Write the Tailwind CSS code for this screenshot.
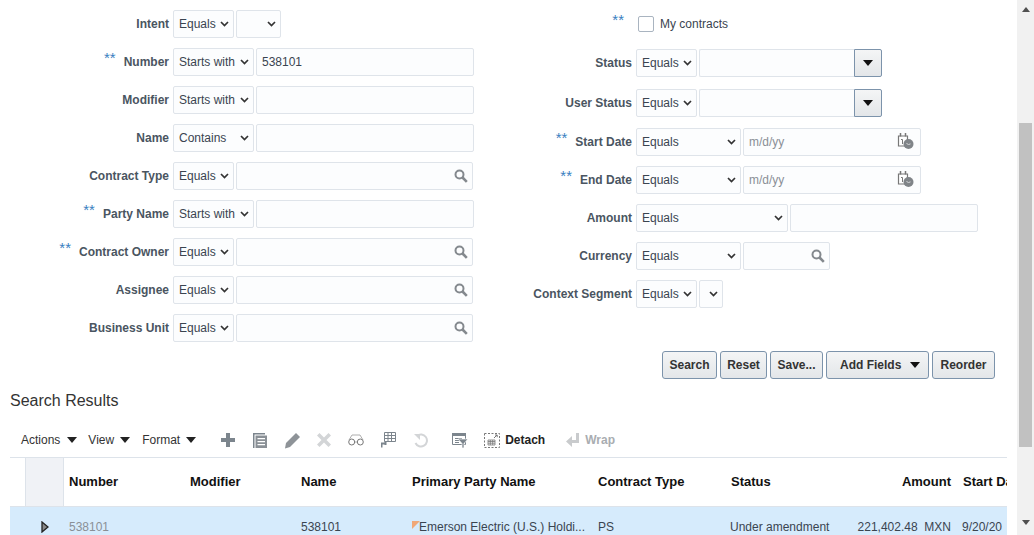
<!DOCTYPE html>
<html lang="en">

<head>
    <meta charset="UTF-8">
    <script src="https://cdn.jsdelivr.net/npm/@tailwindcss/browser@4"></script>
    <title>Contracts Search</title>
</head>

<body class="bg-white h-[535px] overflow-hidden flex font-['Liberation_Sans',Arial,sans-serif] text-xs text-[#3a4450]">
    <div class="w-[1017px] shrink-0 overflow-hidden">
        <!-- Search form -->
        <div class="flex h-[351px]">
            <!-- Left column -->
            <div class="w-[480px] shrink-0 pt-[10px] flex flex-col gap-[10px]">
                <div class="flex items-center h-[28px]">
                    <label class="w-[169px] text-right font-bold text-[#4a5561] mr-[4px]">Intent</label>
                    <div class="w-[61px] h-[28px] border border-[#dfe4ea] rounded-[2px] bg-[#fcfdfe] flex items-center justify-between pl-[5px] pr-[4px]"><span>Equals</span><svg class="w-[9px] h-[6px]" viewBox="0 0 9 6"><path d="M1 1l3.5 3.5L8 1" fill="none" stroke="#333" stroke-width="1.7"/></svg></div>
                    <div class="w-[45px] h-[28px] ml-[2px] border border-[#dfe4ea] rounded-[2px] bg-[#fcfdfe] flex items-center justify-end pr-[4px]"><svg class="w-[9px] h-[6px]" viewBox="0 0 9 6"><path d="M1 1l3.5 3.5L8 1" fill="none" stroke="#333" stroke-width="1.7"/></svg></div>
                </div>
                <div class="flex items-center h-[28px]">
                    <label class="w-[169px] text-right font-bold text-[#4a5561] mr-[4px]"><span class="relative -top-[3px] mr-[8px] font-normal leading-[0px] text-[15px] text-[#3a7fc1]">**</span>Number</label>
                    <div class="w-[81px] h-[28px] border border-[#dfe4ea] rounded-[2px] bg-[#fcfdfe] flex items-center justify-between pl-[5px] pr-[4px]"><span>Starts with</span><svg class="w-[9px] h-[6px]" viewBox="0 0 9 6"><path d="M1 1l3.5 3.5L8 1" fill="none" stroke="#333" stroke-width="1.7"/></svg></div>
                    <div class="w-[218px] h-[28px] ml-[2px] border border-[#dfe4ea] rounded-[2px] bg-[#fcfdfe] flex items-center pl-[5px]">538101</div>
                </div>
                <div class="flex items-center h-[28px]">
                    <label class="w-[169px] text-right font-bold text-[#4a5561] mr-[4px]">Modifier</label>
                    <div class="w-[81px] h-[28px] border border-[#dfe4ea] rounded-[2px] bg-[#fcfdfe] flex items-center justify-between pl-[5px] pr-[4px]"><span>Starts with</span><svg class="w-[9px] h-[6px]" viewBox="0 0 9 6"><path d="M1 1l3.5 3.5L8 1" fill="none" stroke="#333" stroke-width="1.7"/></svg></div>
                    <div class="w-[218px] h-[28px] ml-[2px] border border-[#dfe4ea] rounded-[2px] bg-[#fcfdfe]"></div>
                </div>
                <div class="flex items-center h-[28px]">
                    <label class="w-[169px] text-right font-bold text-[#4a5561] mr-[4px]">Name</label>
                    <div class="w-[81px] h-[28px] border border-[#dfe4ea] rounded-[2px] bg-[#fcfdfe] flex items-center justify-between pl-[5px] pr-[4px]"><span>Contains</span><svg class="w-[9px] h-[6px]" viewBox="0 0 9 6"><path d="M1 1l3.5 3.5L8 1" fill="none" stroke="#333" stroke-width="1.7"/></svg></div>
                    <div class="w-[218px] h-[28px] ml-[2px] border border-[#dfe4ea] rounded-[2px] bg-[#fcfdfe]"></div>
                </div>
                <div class="flex items-center h-[28px]">
                    <label class="w-[169px] text-right font-bold text-[#4a5561] mr-[4px]">Contract Type</label>
                    <div class="w-[61px] h-[28px] border border-[#dfe4ea] rounded-[2px] bg-[#fcfdfe] flex items-center justify-between pl-[5px] pr-[4px]"><span>Equals</span><svg class="w-[9px] h-[6px]" viewBox="0 0 9 6"><path d="M1 1l3.5 3.5L8 1" fill="none" stroke="#333" stroke-width="1.7"/></svg></div>
                    <div class="w-[237px] h-[28px] ml-[2px] border border-[#dfe4ea] rounded-[2px] bg-[#fcfdfe] flex items-center justify-end pr-[4px]"><svg class="w-[14px] h-[14px]" viewBox="0 0 14 14"><circle cx="5.5" cy="5.5" r="4" fill="none" stroke="#84898e" stroke-width="2"/><path d="M8.5 8.5l4.3 4.3" stroke="#84898e" stroke-width="2.6"/></svg></div>
                </div>
                <div class="flex items-center h-[28px]">
                    <label class="w-[169px] text-right font-bold text-[#4a5561] mr-[4px]"><span class="relative -top-[3px] mr-[8px] font-normal leading-[0px] text-[15px] text-[#3a7fc1]">**</span>Party Name</label>
                    <div class="w-[81px] h-[28px] border border-[#dfe4ea] rounded-[2px] bg-[#fcfdfe] flex items-center justify-between pl-[5px] pr-[4px]"><span>Starts with</span><svg class="w-[9px] h-[6px]" viewBox="0 0 9 6"><path d="M1 1l3.5 3.5L8 1" fill="none" stroke="#333" stroke-width="1.7"/></svg></div>
                    <div class="w-[218px] h-[28px] ml-[2px] border border-[#dfe4ea] rounded-[2px] bg-[#fcfdfe]"></div>
                </div>
                <div class="flex items-center h-[28px]">
                    <label class="w-[169px] text-right font-bold text-[#4a5561] mr-[4px]"><span class="relative -top-[3px] mr-[8px] font-normal leading-[0px] text-[15px] text-[#3a7fc1]">**</span>Contract Owner</label>
                    <div class="w-[61px] h-[28px] border border-[#dfe4ea] rounded-[2px] bg-[#fcfdfe] flex items-center justify-between pl-[5px] pr-[4px]"><span>Equals</span><svg class="w-[9px] h-[6px]" viewBox="0 0 9 6"><path d="M1 1l3.5 3.5L8 1" fill="none" stroke="#333" stroke-width="1.7"/></svg></div>
                    <div class="w-[237px] h-[28px] ml-[2px] border border-[#dfe4ea] rounded-[2px] bg-[#fcfdfe] flex items-center justify-end pr-[4px]"><svg class="w-[14px] h-[14px]" viewBox="0 0 14 14"><circle cx="5.5" cy="5.5" r="4" fill="none" stroke="#84898e" stroke-width="2"/><path d="M8.5 8.5l4.3 4.3" stroke="#84898e" stroke-width="2.6"/></svg></div>
                </div>
                <div class="flex items-center h-[28px]">
                    <label class="w-[169px] text-right font-bold text-[#4a5561] mr-[4px]">Assignee</label>
                    <div class="w-[61px] h-[28px] border border-[#dfe4ea] rounded-[2px] bg-[#fcfdfe] flex items-center justify-between pl-[5px] pr-[4px]"><span>Equals</span><svg class="w-[9px] h-[6px]" viewBox="0 0 9 6"><path d="M1 1l3.5 3.5L8 1" fill="none" stroke="#333" stroke-width="1.7"/></svg></div>
                    <div class="w-[237px] h-[28px] ml-[2px] border border-[#dfe4ea] rounded-[2px] bg-[#fcfdfe] flex items-center justify-end pr-[4px]"><svg class="w-[14px] h-[14px]" viewBox="0 0 14 14"><circle cx="5.5" cy="5.5" r="4" fill="none" stroke="#84898e" stroke-width="2"/><path d="M8.5 8.5l4.3 4.3" stroke="#84898e" stroke-width="2.6"/></svg></div>
                </div>
                <div class="flex items-center h-[28px]">
                    <label class="w-[169px] text-right font-bold text-[#4a5561] mr-[4px]">Business Unit</label>
                    <div class="w-[61px] h-[28px] border border-[#dfe4ea] rounded-[2px] bg-[#fcfdfe] flex items-center justify-between pl-[5px] pr-[4px]"><span>Equals</span><svg class="w-[9px] h-[6px]" viewBox="0 0 9 6"><path d="M1 1l3.5 3.5L8 1" fill="none" stroke="#333" stroke-width="1.7"/></svg></div>
                    <div class="w-[237px] h-[28px] ml-[2px] border border-[#dfe4ea] rounded-[2px] bg-[#fcfdfe] flex items-center justify-end pr-[4px]"><svg class="w-[14px] h-[14px]" viewBox="0 0 14 14"><circle cx="5.5" cy="5.5" r="4" fill="none" stroke="#84898e" stroke-width="2"/><path d="M8.5 8.5l4.3 4.3" stroke="#84898e" stroke-width="2.6"/></svg></div>
                </div>
            </div>

            <!-- Right column -->
            <div class="flex-1 pt-[10px] flex flex-col">
                <div class="flex items-center h-[28px]">
                    <label class="w-[152px] text-right mr-[4px] pr-[8px]"><span class="relative -top-[3px] leading-[0px] text-[15px] text-[#3a7fc1]">**</span></label>
                    <div class="w-[16px] h-[16px] ml-[2px] border border-[#a9b4c0] rounded-[2px] bg-white"></div>
                    <span class="ml-[6px]">My contracts</span>
                </div>
                <div class="flex items-center h-[28px] mt-[11px]">
                    <label class="w-[152px] text-right font-bold text-[#4a5561] mr-[4px]">Status</label>
                    <div class="w-[61px] h-[28px] border border-[#dfe4ea] rounded-[2px] bg-[#fcfdfe] flex items-center justify-between pl-[5px] pr-[4px]"><span>Equals</span><svg class="w-[9px] h-[6px]" viewBox="0 0 9 6"><path d="M1 1l3.5 3.5L8 1" fill="none" stroke="#333" stroke-width="1.7"/></svg></div>
                    <div class="w-[155px] h-[28px] ml-[2px] border border-r-0 border-[#dfe4ea] rounded-l-[2px] bg-[#fcfdfe]"></div>
                    <div class="w-[28px] h-[28px] border border-[#7c93ab] rounded-r-[2px] bg-gradient-to-b from-[#f4f5f6] to-[#e3e6e9] flex items-center justify-center"><svg class="w-[10px] h-[6px]" viewBox="0 0 10 6"><path d="M0 0h10L5 6z" fill="#111"/></svg></div>
                </div>
                <div class="flex items-center h-[28px] mt-[12px]">
                    <label class="w-[152px] text-right font-bold text-[#4a5561] mr-[4px]">User Status</label>
                    <div class="w-[61px] h-[28px] border border-[#dfe4ea] rounded-[2px] bg-[#fcfdfe] flex items-center justify-between pl-[5px] pr-[4px]"><span>Equals</span><svg class="w-[9px] h-[6px]" viewBox="0 0 9 6"><path d="M1 1l3.5 3.5L8 1" fill="none" stroke="#333" stroke-width="1.7"/></svg></div>
                    <div class="w-[155px] h-[28px] ml-[2px] border border-r-0 border-[#dfe4ea] rounded-l-[2px] bg-[#fcfdfe]"></div>
                    <div class="w-[28px] h-[28px] border border-[#7c93ab] rounded-r-[2px] bg-gradient-to-b from-[#f4f5f6] to-[#e3e6e9] flex items-center justify-center"><svg class="w-[10px] h-[6px]" viewBox="0 0 10 6"><path d="M0 0h10L5 6z" fill="#111"/></svg></div>
                </div>
                <div class="flex items-center h-[28px] mt-[11px]">
                    <label class="w-[152px] text-right font-bold text-[#4a5561] mr-[4px]"><span class="relative -top-[3px] mr-[8px] font-normal leading-[0px] text-[15px] text-[#3a7fc1]">**</span>Start Date</label>
                    <div class="w-[105px] h-[28px] border border-[#dfe4ea] rounded-[2px] bg-[#fcfdfe] flex items-center justify-between pl-[5px] pr-[4px]"><span>Equals</span><svg class="w-[9px] h-[6px]" viewBox="0 0 9 6"><path d="M1 1l3.5 3.5L8 1" fill="none" stroke="#333" stroke-width="1.7"/></svg></div>
                    <div class="w-[178px] h-[28px] ml-[2px] border border-[#dfe4ea] rounded-[2px] bg-[#fcfdfe] flex items-center justify-between pl-[5px] pr-[6px] text-[#8a8f96]"><span>m/d/yy</span><svg class="w-[17px] h-[16px] -mt-[2px]" viewBox="0 0 17 16"><path d="M1.500 3h9v10h-9z" fill="#fff" stroke="#777" stroke-width="1.2"/><path d="M3.500 0v3.500M8.500 0v3.500" stroke="#777" stroke-width="1.500"/><path d="M4 6.500h1.500v4.500" fill="none" stroke="#777"/><circle cx="11.500" cy="11" r="5" fill="#808488"/><path d="M9.500 10.500l2 1 2-.6" fill="none" stroke="#d5d7d9"/></svg></div>
                </div>
                <div class="flex items-center h-[28px] mt-[10px]">
                    <label class="w-[152px] text-right font-bold text-[#4a5561] mr-[4px]"><span class="relative -top-[3px] mr-[8px] font-normal leading-[0px] text-[15px] text-[#3a7fc1]">**</span>End Date</label>
                    <div class="w-[105px] h-[28px] border border-[#dfe4ea] rounded-[2px] bg-[#fcfdfe] flex items-center justify-between pl-[5px] pr-[4px]"><span>Equals</span><svg class="w-[9px] h-[6px]" viewBox="0 0 9 6"><path d="M1 1l3.5 3.5L8 1" fill="none" stroke="#333" stroke-width="1.7"/></svg></div>
                    <div class="w-[178px] h-[28px] ml-[2px] border border-[#dfe4ea] rounded-[2px] bg-[#fcfdfe] flex items-center justify-between pl-[5px] pr-[6px] text-[#8a8f96]"><span>m/d/yy</span><svg class="w-[17px] h-[16px] -mt-[2px]" viewBox="0 0 17 16"><path d="M1.500 3h9v10h-9z" fill="#fff" stroke="#777" stroke-width="1.2"/><path d="M3.500 0v3.500M8.500 0v3.500" stroke="#777" stroke-width="1.500"/><path d="M4 6.500h1.500v4.500" fill="none" stroke="#777"/><circle cx="11.500" cy="11" r="5" fill="#808488"/><path d="M9.500 10.500l2 1 2-.6" fill="none" stroke="#d5d7d9"/></svg></div>
                </div>
                <div class="flex items-center h-[28px] mt-[10px]">
                    <label class="w-[152px] text-right font-bold text-[#4a5561] mr-[4px]">Amount</label>
                    <div class="w-[152px] h-[28px] border border-[#dfe4ea] rounded-[2px] bg-[#fcfdfe] flex items-center justify-between pl-[5px] pr-[4px]"><span>Equals</span><svg class="w-[9px] h-[6px]" viewBox="0 0 9 6"><path d="M1 1l3.5 3.5L8 1" fill="none" stroke="#333" stroke-width="1.7"/></svg></div>
                    <div class="w-[188px] h-[28px] ml-[2px] border border-[#dfe4ea] rounded-[2px] bg-[#fcfdfe]"></div>
                </div>
                <div class="flex items-center h-[28px] mt-[10px]">
                    <label class="w-[152px] text-right font-bold text-[#4a5561] mr-[4px]">Currency</label>
                    <div class="w-[105px] h-[28px] border border-[#dfe4ea] rounded-[2px] bg-[#fcfdfe] flex items-center justify-between pl-[5px] pr-[4px]"><span>Equals</span><svg class="w-[9px] h-[6px]" viewBox="0 0 9 6"><path d="M1 1l3.5 3.5L8 1" fill="none" stroke="#333" stroke-width="1.7"/></svg></div>
                    <div class="w-[87px] h-[28px] ml-[2px] border border-[#dfe4ea] rounded-[2px] bg-[#fcfdfe] flex items-center justify-end pr-[4px]"><svg class="w-[14px] h-[14px]" viewBox="0 0 14 14"><circle cx="5.5" cy="5.5" r="4" fill="none" stroke="#84898e" stroke-width="2"/><path d="M8.5 8.5l4.3 4.3" stroke="#84898e" stroke-width="2.6"/></svg></div>
                </div>
                <div class="flex items-center h-[28px] mt-[10px]">
                    <label class="w-[152px] text-right font-bold text-[#4a5561] mr-[4px]">Context Segment</label>
                    <div class="w-[61px] h-[28px] border border-[#dfe4ea] rounded-[2px] bg-[#fcfdfe] flex items-center justify-between pl-[5px] pr-[4px]"><span>Equals</span><svg class="w-[9px] h-[6px]" viewBox="0 0 9 6"><path d="M1 1l3.5 3.5L8 1" fill="none" stroke="#333" stroke-width="1.7"/></svg></div>
                    <div class="w-[24px] h-[28px] ml-[2px] border border-[#dfe4ea] rounded-[2px] bg-[#fcfdfe] flex items-center justify-end pr-[4px]"><svg class="w-[9px] h-[6px]" viewBox="0 0 9 6"><path d="M1 1l3.5 3.5L8 1" fill="none" stroke="#333" stroke-width="1.7"/></svg></div>
                </div>
            </div>
        </div>

        <!-- Buttons -->
        <div class="flex h-[28px] pl-[662px] gap-[3px] font-bold text-[#333]">
            <button class="w-[55px] h-[28px] border border-[#7c93ab] rounded-[3px] bg-gradient-to-b from-[#f4f5f6] to-[#e3e6e9]">Search</button>
            <button class="w-[47px] h-[28px] border border-[#7c93ab] rounded-[3px] bg-gradient-to-b from-[#f4f5f6] to-[#e3e6e9]">Reset</button>
            <button class="w-[53px] h-[28px] border border-[#7c93ab] rounded-[3px] bg-gradient-to-b from-[#f4f5f6] to-[#e3e6e9]">Save...</button>
            <button class="w-[103px] h-[28px] border border-[#7c93ab] rounded-[3px] bg-gradient-to-b from-[#f4f5f6] to-[#e3e6e9] flex items-center pl-[13px]">Add Fields<svg class="w-[10px] h-[6px] ml-[9px] -mt-[1px]" viewBox="0 0 10 6"><path d="M0 0h10L5 6z" fill="#111"/></svg></button>
            <button class="w-[63px] h-[28px] border border-[#7c93ab] rounded-[3px] bg-gradient-to-b from-[#f4f5f6] to-[#e3e6e9]">Reorder</button>
        </div>

        <!-- Search results -->
        <h2 class="pl-[10px] mt-[12px] h-[20px] leading-[20px] text-base text-[#333]">Search Results</h2>

        <!-- Toolbar -->
        <div class="flex items-center h-[26px] mt-[16px] pl-[21px] text-[#333]">
            <span>Actions</span><svg class="w-[10px] h-[6px] ml-[7px]" viewBox="0 0 10 6"><path d="M0 0h10L5 6z" fill="#222"/></svg>
            <span class="ml-[11px]">View</span><svg class="w-[10px] h-[6px] ml-[6px]" viewBox="0 0 10 6"><path d="M0 0h10L5 6z" fill="#222"/></svg>
            <span class="ml-[12px]">Format</span><svg class="w-[10px] h-[6px] ml-[6px]" viewBox="0 0 10 6"><path d="M0 0h10L5 6z" fill="#222"/></svg>
            <svg class="w-[14px] h-[14px] ml-[25px]" viewBox="0 0 14 14"><path d="M5 0h4v5h5v4H9v5H5V9H0V5h5z" fill="#7c858d"/></svg>
            <svg class="w-[14px] h-[15px] ml-[18px]" viewBox="0 0 14 15"><path d="M0 0h12v1.500H1.500V15H0z" fill="#7c858d"/><path d="M2.500 2.500H14V15H2.500z" fill="#8a9096"/><path d="M4.500 5h7.500v1.300H4.500zM4.500 8h7.500v1.300H4.500zM4.500 11h7.500v1.300H4.500z" fill="#fff"/></svg>
            <svg class="w-[17px] h-[17px] ml-[17px]" viewBox="0 0 17 17"><path d="M12 1l4 4L6 15l-5 1.500L2 11z" fill="#8e9398"/></svg>
            <svg class="w-[14px] h-[14px] ml-[16px]" viewBox="0 0 14 14"><path d="M0 2.500L2.500 0 7 4.500 11.500 0 14 2.500 9.500 7 14 11.500 11.500 14 7 9.500 2.500 14 0 11.500 4.500 7z" fill="#d3d5d7"/></svg>
            <svg class="w-[16px] h-[12px] ml-[17px]" viewBox="0 0 16 12"><circle cx="3.700" cy="8" r="3" fill="none" stroke="#777"/><circle cx="12.300" cy="8" r="3" fill="none" stroke="#777"/><path d="M6.700 8h2.600M1 6l3-5h8l3 5" fill="none" stroke="#999" stroke-width=".8"/></svg>
            <svg class="w-[15px] h-[16px] ml-[17px]" viewBox="0 0 15 16"><path d="M3.500 .5h11v9h-11zM3.500 3.500h11M7 .5v9M10.500 .5v9M3.500 6.500h11" fill="none" stroke="#7c858d"/><path d="M.5 15.500v-4h4M4.500 9.500v3.500" fill="none" stroke="#7c858d" stroke-width="2"/></svg>
            <svg class="w-[15px] h-[15px] ml-[17px]" viewBox="0 0 15 15"><path d="M4 3a6 6 0 1 1-1.500 7" fill="none" stroke="#d3d5d7" stroke-width="2"/><path d="M1 1h6v6z" fill="#d3d5d7"/></svg>
            <svg class="w-[16px] h-[15px] ml-[24px]" viewBox="0 0 16 15"><path d="M.5 .5h13v11H.5z" fill="none" stroke="#7c858d"/><path d="M0 0h14v3H0zM3 5h7v1H3zM3 7h5v1H3zM3 9h4v1H3z" fill="#7c858d"/><path d="M6 6h10l-4 4.500V15H10v-4.500z" fill="#7c858d" stroke="#fff" stroke-width=".7"/></svg>
            <svg class="w-[16px] h-[15px] ml-[16px]" viewBox="0 0 16 15"><path d="M.5 .5h15v14H.5z" fill="none" stroke="#777" stroke-dasharray="2 1.500"/><path d="M4 7h7v5H4zM4 8.500h7M4 10.200h7M6.300 7v5M8.700 7v5" fill="none" stroke="#777" stroke-width=".8"/><path d="M10 5l3-3M11 2h2.200v2.200" fill="none" stroke="#777"/></svg>
            <span class="ml-[5px] font-bold text-[#222]">Detach</span>
            <svg class="w-[13px] h-[14px] ml-[21px]" viewBox="0 0 13 14"><path d="M10 0h3v10H6v4L0 8.500 6 3v4h4z" fill="#c9cbcd"/></svg>
            <span class="ml-[6px] font-bold text-[#a9adb1]">Wrap</span>
        </div>

        <!-- Results table -->
        <div class="ml-[10px] w-[997px] mt-[4px] overflow-hidden">
            <div class="flex h-[50px] border-t border-b border-[#dde3ea] font-bold text-[13px] leading-[47px] text-[#111] whitespace-nowrap">
                <div class="w-[15px] shrink-0"></div>
                <div class="w-[39px] shrink-0 bg-[#f0f2f6] border-l border-r border-[#dde3ea]"></div>
                <div class="w-[121px] shrink-0 pl-[5px]">Number</div>
                <div class="w-[111px] shrink-0 pl-[5px]">Modifier</div>
                <div class="w-[111px] shrink-0 pl-[5px]">Name</div>
                <div class="w-[186px] shrink-0 pl-[5px]">Primary Party Name</div>
                <div class="w-[133px] shrink-0 pl-[5px]">Contract Type</div>
                <div class="w-[125px] shrink-0 pl-[5px]">Status</div>
                <div class="w-[105px] shrink-0 pr-[5px] text-right">Amount</div>
                <div class="w-[51px] shrink-0 pl-[7px] overflow-hidden">Start Date</div>
            </div>
            <div class="flex h-[30px] bg-[#d6ebfc] leading-[41px] whitespace-nowrap">
                <div class="w-[15px] shrink-0"></div>
                <div class="w-[39px] shrink-0 flex items-start pl-[16px] pt-[14px]"><svg class="w-[8px] h-[12px]" viewBox="0 0 8 12"><path d="M1 1l6 5-6 5z" fill="#888" stroke="#222" stroke-width="1.300"/></svg></div>
                <div class="w-[121px] shrink-0 pl-[5px] text-[#8a8f96]">538101</div>
                <div class="w-[111px] shrink-0"></div>
                <div class="w-[111px] shrink-0 pl-[5px]">538101</div>
                <div class="w-[186px] shrink-0 pl-[12px] relative"><span class="absolute left-[5px] top-[14px] border-t-[8px] border-r-[8px] border-t-[#f0a878] border-r-transparent"></span>Emerson Electric (U.S.) Holdi...</div>
                <div class="w-[133px] shrink-0 pl-[5px]">PS</div>
                <div class="w-[125px] shrink-0 pl-[4px]">Under amendment</div>
                <div class="w-[105px] shrink-0 pr-[5px] text-right">221,402.48&nbsp; MXN</div>
                <div class="w-[51px] shrink-0 pl-[6px] overflow-hidden">9/20/20</div>
            </div>
        </div>
    </div>

    <!-- Page scrollbar -->
    <div class="w-[17px] shrink-0 h-[535px] bg-[#f1f1f1] flex flex-col items-center">
        <svg class="w-[8px] h-[5px] mt-[7px]" viewBox="0 0 8 5"><path d="M4 0l4 5H0z" fill="#505050"/></svg>
        <div class="w-[13px] h-[324px] mt-[111px] bg-[#c1c1c1]"></div>
        <svg class="w-[8px] h-[5px] mt-[73px]" viewBox="0 0 8 5"><path d="M0 0h8L4 5z" fill="#505050"/></svg>
    </div>
</body>

</html>
